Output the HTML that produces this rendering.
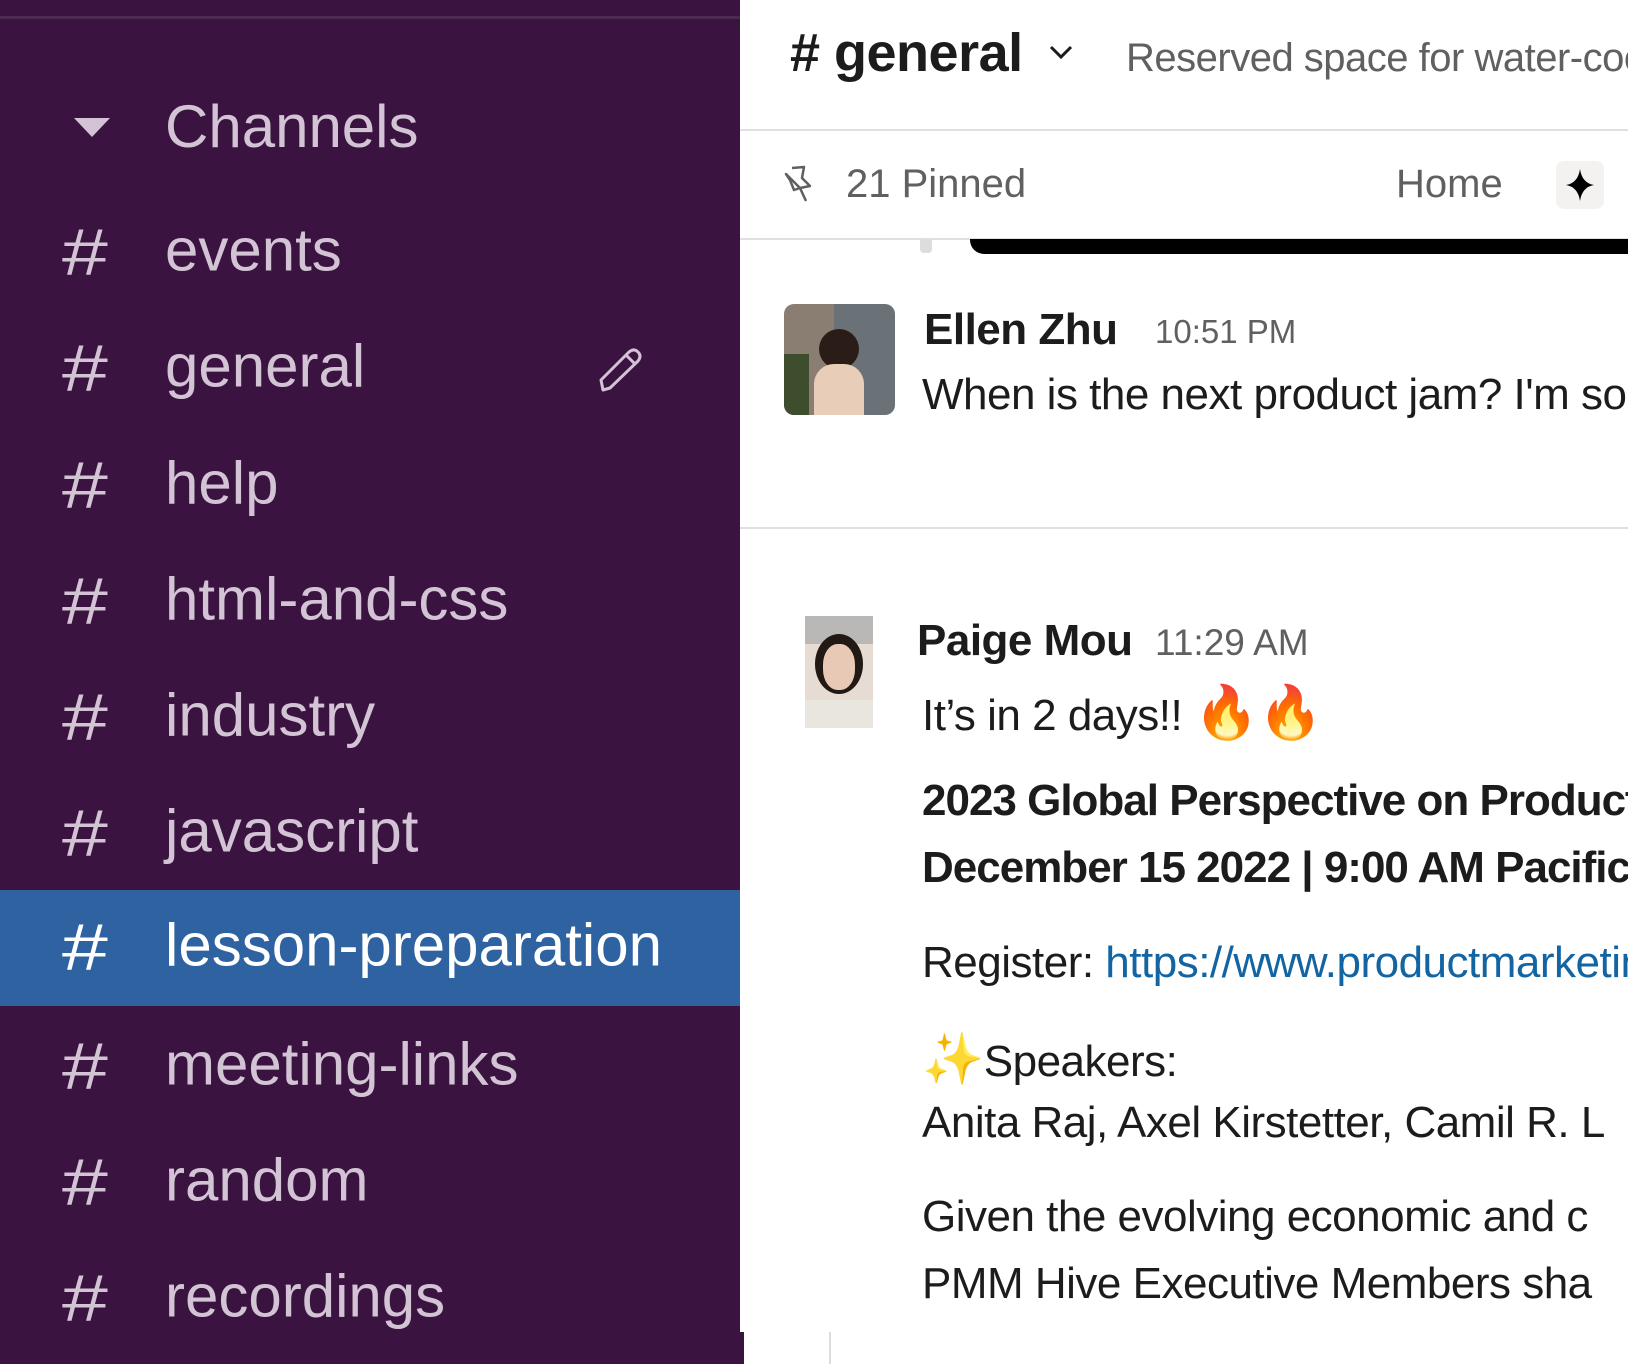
<!DOCTYPE html>
<html><head><meta charset="utf-8"><style>
*{margin:0;padding:0;box-sizing:border-box}
body{width:1628px;height:1364px;overflow:hidden;background:#fff;position:relative;font-family:"Liberation Sans",sans-serif}
.sb{position:absolute;left:0;top:0;width:740px;height:1332px;background:#3b1340}
.sbb{position:absolute;left:0;top:1332px;width:744px;height:32px;background:#3b1340}
.tl{position:absolute;left:0;top:16px;width:740px;height:3px;background:#4d2a52}
.row{position:absolute;left:0;width:740px;height:116px;color:#d3c4d5;font-size:60px;letter-spacing:0}
.row .h{position:absolute;left:62px;top:50%;transform:translateY(-52%) scaleX(1.25);transform-origin:left center;font-size:66px;font-weight:300}
.row .t{position:absolute;left:165px;top:50%;transform:translateY(-54%)}
.sel{background:#2e62a0;color:#fff}
.a{position:absolute;white-space:nowrap}
.main{position:absolute;left:740px;top:0;width:888px;height:1332px;overflow:hidden}
</style></head><body>
<div class="sb">
<div class="tl"></div>
<svg class="a" style="left:74px;top:118px" width="36" height="20"><polygon points="0,0 36,0 18,19" fill="#d3c4d5"/></svg>
<div class="a" style="left:165px;top:92px;font-size:60px;color:#d3c4d5">Channels</div>
<div class="row" style="top:195px"><span class="h">#</span><span class="t">events</span></div>
<div class="row" style="top:311px"><span class="h">#</span><span class="t">general</span>
<svg class="a" style="left:596px;top:35px" width="50" height="48" viewBox="0 0 50 48"><path d="M7 44 L5 34 L33 6 Q38 2 42 6 Q46 10 42 15 L14 42 Z M30 9 L39 18" fill="none" stroke="#d3c4d5" stroke-width="3" stroke-linejoin="round"/></svg></div>
<div class="row" style="top:428px"><span class="h">#</span><span class="t">help</span></div>
<div class="row" style="top:544px"><span class="h">#</span><span class="t">html-and-css</span></div>
<div class="row" style="top:660px"><span class="h">#</span><span class="t">industry</span></div>
<div class="row" style="top:776px"><span class="h">#</span><span class="t">javascript</span></div>
<div class="row sel" style="top:890px"><span class="h">#</span><span class="t">lesson-preparation</span></div>
<div class="row" style="top:1009px"><span class="h">#</span><span class="t">meeting-links</span></div>
<div class="row" style="top:1125px"><span class="h">#</span><span class="t">random</span></div>
<div class="row" style="top:1241px"><span class="h">#</span><span class="t">recordings</span></div>
</div>
<div class="sbb"></div>
<div class="a" style="left:829px;top:1332px;width:2px;height:32px;background:#ddd"></div>
<div class="main">
<div class="a" style="left:50px;top:22px;font-size:54px;font-weight:bold;color:#1d1c1d;letter-spacing:-0.5px"># general</div>
<svg class="a" style="left:309px;top:44px" width="24" height="16"><path d="M2 3 L12 13 L22 3" fill="none" stroke="#1d1c1d" stroke-width="3"/></svg>
<div class="a" style="left:386px;top:36px;font-size:40px;color:#616061;letter-spacing:-0.5px">Reserved space for water-cooler conversation</div>
<div class="a" style="left:0;top:129px;width:888px;height:2px;background:#e0e0e0"></div>
<svg class="a" style="left:44px;top:164px" width="32" height="40" viewBox="0 0 32 40"><path d="M8 4 L20 3 L18 14 L26 22 L16 24 L22 37 M16 24 L10 26 L6 16 L2 10 Z" fill="none" stroke="#616061" stroke-width="2.5" stroke-linejoin="round"/></svg>
<div class="a" style="left:106px;top:162px;font-size:40px;color:#616061">21 Pinned</div>
<div class="a" style="left:656px;top:162px;font-size:40px;color:#616061">Home</div>
<div class="a" style="left:816px;top:161px;width:48px;height:48px;background:#f3f2f1;border-radius:8px"><svg width="48" height="48"><path d="M24 8 Q26 22 38 24 Q26 26 24 40 Q22 26 10 24 Q22 22 24 8Z" fill="#000"/></svg></div>
<div class="a" style="left:0;top:238px;width:888px;height:2px;background:#e0e0e0"></div>
<div class="a" style="left:180px;top:239px;width:12px;height:14px;background:#ddd;border-radius:0 0 4px 4px"></div>
<div class="a" style="left:230px;top:239px;width:700px;height:15px;background:#000;border-radius:0 0 0 14px"></div>
<div class="a" style="left:44px;top:304px;width:111px;height:111px;border-radius:10px;overflow:hidden;background:linear-gradient(90deg,#8a7d72 0 45%,#6a7278 45% 100%)">
<div class="a" style="left:0;top:50px;width:25px;height:61px;background:#3e4d2e"></div>
<div class="a" style="left:35px;top:25px;width:40px;height:40px;border-radius:50%;background:#2a1d18"></div>
<div class="a" style="left:30px;top:60px;width:50px;height:51px;border-radius:20px 20px 0 0;background:#e8cdb8"></div>
</div>
<div class="a" style="left:184px;top:305px;font-size:44px;font-weight:bold;color:#1d1c1d;letter-spacing:-0.5px">Ellen Zhu</div>
<div class="a" style="left:415px;top:313px;font-size:33px;color:#616061">10:51 PM</div>
<div class="a" style="left:182px;top:370px;font-size:44px;color:#1d1c1d;letter-spacing:-0.5px">When is the next product jam? I'm so excited</div>
<div class="a" style="left:0;top:527px;width:888px;height:2px;background:#e0e0e0"></div>
<div class="a" style="left:65px;top:616px;width:68px;height:112px;background:linear-gradient(180deg,#b9b8b6 0 25%,#e7dcd3 25% 75%,#e9e6df 75%)">
<div class="a" style="left:10px;top:18px;width:48px;height:60px;border-radius:50%;background:#221814"></div>
<div class="a" style="left:18px;top:28px;width:32px;height:46px;border-radius:45%;background:#e8c9b6"></div>
</div>
<div class="a" style="left:177px;top:616px;font-size:44px;font-weight:bold;color:#1d1c1d;letter-spacing:-0.5px">Paige Mou</div>
<div class="a" style="left:415px;top:622px;font-size:37px;color:#616061">11:29 AM</div>
<div class="a" style="left:182px;top:682px;font-size:44px;color:#1d1c1d;letter-spacing:-0.5px">It’s in 2 days!! <span style="font-size:52px">🔥🔥</span></div>
<div class="a" style="left:182px;top:776px;font-size:44px;font-weight:bold;color:#1d1c1d;letter-spacing:-1px">2023 Global Perspective on Product Marketing</div>
<div class="a" style="left:182px;top:843px;font-size:44px;font-weight:bold;color:#1d1c1d;letter-spacing:-1px">December 15 2022 | 9:00 AM Pacific</div>
<div class="a" style="left:182px;top:938px;font-size:44px;color:#1d1c1d;letter-spacing:-0.5px">Register: <span style="color:#1264a3">https://www.productmarketing</span></div>
<div class="a" style="left:182px;top:1030px;font-size:44px;color:#1d1c1d;letter-spacing:-0.5px"><span style="font-size:50px">✨</span>Speakers:</div>
<div class="a" style="left:182px;top:1098px;font-size:44px;color:#1d1c1d;letter-spacing:-0.5px">Anita Raj, Axel Kirstetter, Camil R. L</div>
<div class="a" style="left:182px;top:1192px;font-size:44px;color:#1d1c1d;letter-spacing:-0.5px">Given the evolving economic and c</div>
<div class="a" style="left:182px;top:1259px;font-size:44px;color:#1d1c1d;letter-spacing:-0.5px">PMM Hive Executive Members sha</div>
</div>
</body></html>
